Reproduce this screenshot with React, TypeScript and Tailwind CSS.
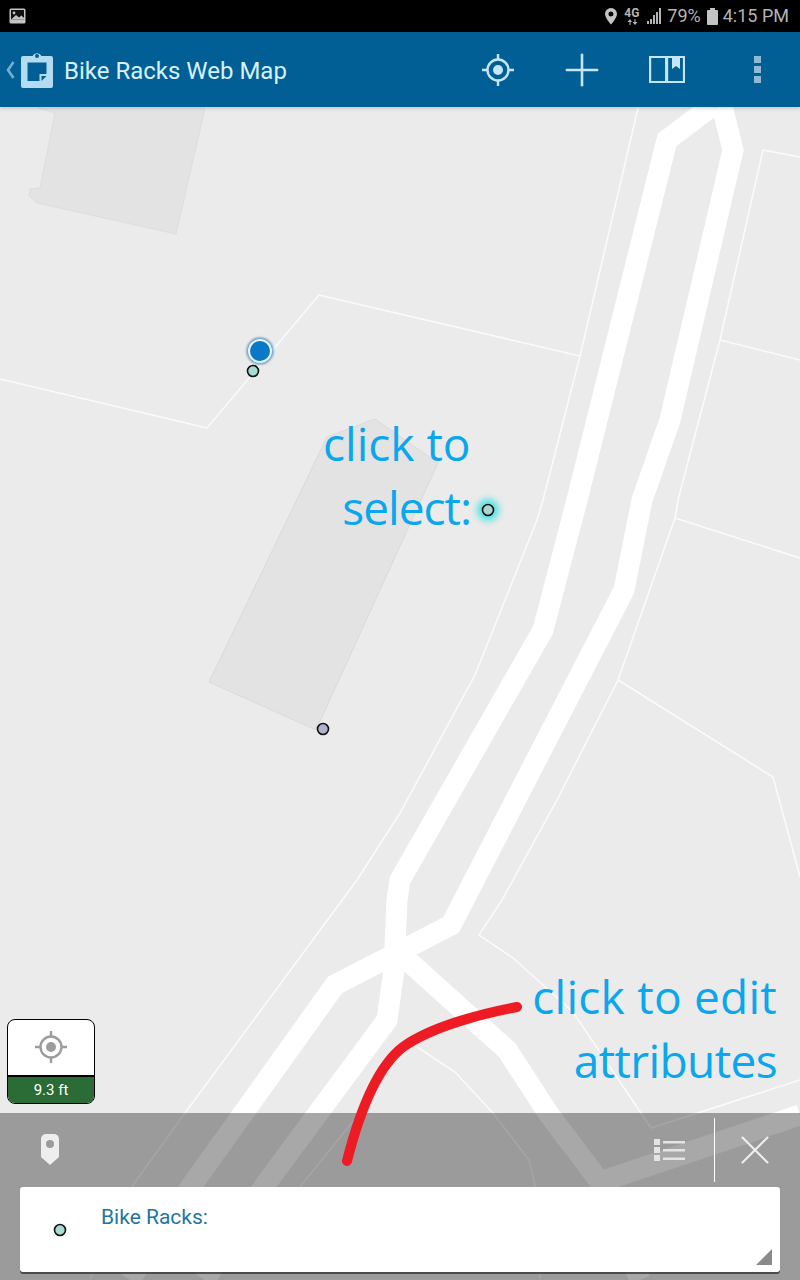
import { Plus, X } from 'lucide-react';

const thinLines = [
  '0,379 207,428 319,295 580,356',
  '638,108 580,356 543,500 537,520 475,675 400,813 357,880 185,1113 133,1185 90,1280',
  '763,150 800,157',
  '763,150 720,340 678,500 675,518 618,680 557,800 502,900 479,935 513,958 573,1012 651,1128 800,1080',
  '720,340 800,360',
  '675,518 800,558',
  '618,680 773,777 800,877',
  '417,1047 455,1072 493,1113 529,1160 535,1185 540,1280',
  '354,1120 300,1187',
];

const roads = [
  '712,106 667,140 577,500 543,630 400,880 397,900 394,970 387,1020 265,1185 205,1280',
  '722,106 733,150 670,420 642,500 624,590 451,925 335,985 192,1185 130,1280',
  '396,950 507,1050 548,1113 600,1182 640,1280',
  '600,1182 800,1115',
];

function BikeRackDot({ x, y, fill = '#a6dcd2' }: { x: number; y: number; fill?: string }) {
  return <circle cx={x} cy={y} r={5.5} fill={fill} stroke="#111" strokeWidth={1.6} />;
}

function MapLayer() {
  return (
    <svg className="absolute inset-0" width={800} height={1173} viewBox="0 107 800 1173">
      <defs>
        <filter id="glow" x="-100%" y="-100%" width="300%" height="300%">
          <feGaussianBlur stdDeviation="3" />
        </filter>
        <filter id="halo" x="-50%" y="-50%" width="200%" height="200%">
          <feGaussianBlur stdDeviation="1" />
        </filter>
      </defs>
      <polygon
        points="38,108 55,113 40,188 30,189 29,196 37,203 176,234 205,108"
        fill="#e3e3e3"
        stroke="#dedede"
      />
      <polygon points="375,419 438,463 316,730 209,682 327,437" fill="#e3e3e3" stroke="#dadada" />
      {thinLines.map((pts) => (
        <polyline key={pts} points={pts} fill="none" stroke="#fbfbfb" strokeWidth={1.5} />
      ))}
      {roads.map((pts) => (
        <polyline key={pts} points={pts} fill="none" stroke="#fff" strokeWidth={21} strokeLinejoin="miter" />
      ))}
      <circle cx={260} cy={351} r={13.5} fill="#2a72b0" opacity={0.7} filter="url(#halo)" />
      <circle cx={260} cy={351} r={12} fill="#e8f6fd" />
      <circle cx={260} cy={351} r={10} fill="#0a78c8" />
      <BikeRackDot x={253} y={371} />
      <circle cx={488} cy={510} r={11} fill="#22e0e0" opacity={0.75} filter="url(#glow)" />
      <BikeRackDot x={488} y={510} fill="#a9d6d2" />
      <BikeRackDot x={323} y={729} fill="#aeb2cf" />
    </svg>
  );
}

function TargetIcon({ size, color }: { size: number; color: string }) {
  return (
    <svg width={size} height={size} viewBox="0 0 32 32" fill="none" stroke={color}>
      <circle cx={16} cy={16} r={10.5} strokeWidth={2.4} />
      <circle cx={16} cy={16} r={5} fill={color} stroke="none" />
      <path d="M16 0v5M16 27v5M0 16h5M27 16h5" strokeWidth={2.4} />
    </svg>
  );
}

function StatusBar() {
  return (
    <div className="flex h-8 shrink-0 items-center bg-black pl-[9px] pr-[11px] text-[#b4b4b4]">
      <svg width={17} height={16} viewBox="0 0 17 16">
        <rect x={0.5} y={0.5} width={16} height={15} rx={1.5} fill="#c4c4c4" />
        <rect x={2} y={2} width={13} height={9.5} fill="#111" />
        <circle cx={5} cy={5} r={1.4} fill="#c4c4c4" />
        <path d="M2 11.5 7 7l3 2.5 2.5-2 2.5 2.5v1.5z" fill="#c4c4c4" />
      </svg>
      <div className="ml-auto flex items-center">
        <svg width={14} height={18} viewBox="0 0 14 18">
          <path
            d="M7 1a6 6 0 0 0-6 6c0 4 6 10.500 6 10.500S13 11 13 7a6 6 0 0 0-6-6zm0 8.500A2.500 2.500 0 1 1 7 4.500a2.500 2.500 0 0 1 0 5z"
            fill="#c4c4c4"
          />
        </svg>
        <div className="ml-[6px] flex w-[18px] flex-col items-start">
          <span className="text-[12px] font-bold leading-[10px]">4G</span>
          <svg className="ml-[3px] mt-[1px]" width={11} height={6} viewBox="0 0 11 6" fill="#b4b4b4">
            <path d="M2.500 6V3H0.500l2.500-3 2 3H3.500v3zM7.500 0v3h-2l2.500 3 2.500-3H8.500V0z" />
          </svg>
        </div>
        <svg className="ml-[5px]" width={15} height={16} viewBox="0 0 15 16" fill="#b4b4b4">
          <rect x={0} y={13} width={2} height={3} />
          <rect x={3} y={11} width={2} height={5} />
          <rect x={6} y={7} width={2} height={9} />
          <rect x={9} y={4} width={2} height={12} />
          <rect x={12} y={0} width={2} height={16} />
        </svg>
        <span className="ml-[5px] text-[18px] leading-none">79%</span>
        <svg className="ml-[6px]" width={11} height={17} viewBox="0 0 11 17" fill="#c4c4c4">
          <rect x={3} y={0} width={5} height={2} />
          <rect x={0} y={2} width={11} height={15} rx={1} />
        </svg>
        <span className="ml-[5px] text-[18px] leading-none">4:15 PM</span>
      </div>
    </div>
  );
}

function Header() {
  return (
    <header className="relative z-10 flex h-[75px] shrink-0 items-center bg-[#025f96] text-[#d6f1fb] shadow-[0_1px_4px_rgba(0,0,0,0.2)]">
      <svg className="ml-[6px]" width={9} height={18} viewBox="0 0 9 18" fill="none" stroke="#74aed0" strokeWidth={2.6}>
        <path d="M7.500 1 2 9l5.500 8" />
      </svg>
      <svg className="ml-[6px] mt-[-1px]" width={32} height={38} viewBox="0 0 32 38">
        <path
          d="M2 6h9.500a5 5 0 0 1 9 0H30a2 2 0 0 1 2 2v28a2 2 0 0 1-2 2H2a2 2 0 0 1-2-2V8a2 2 0 0 1 2-2z"
          fill="#b4dcf0"
        />
        <circle cx={16} cy={6} r={2} fill="#025f96" />
        <path d="M6.500 12.500h19v11.500h-7v7h-12z" fill="#025f96" />
        <path d="M20.500 26h5l-5 5z" fill="#025f96" />
      </svg>
      <h1 className="ml-[11px] mt-[2px] text-[24px] leading-none">Bike Racks Web Map</h1>
      <div className="ml-auto flex items-center">
        <TargetIcon size={32} color="#c4e6f6" />
        <Plus className="ml-[42px] text-[#c4e6f6]" size={52} strokeWidth={1.2} />
        <svg className="ml-[41px]" width={36} height={29} viewBox="0 0 36 29" fill="none" stroke="#c4e6f6" strokeWidth={2.2}>
          <path d="M1.100 2h16v25h-16zM18 2h17v25H18z" />
          <path d="M18 1v27" />
          <path d="M23 2h8v12l-4-3-4 3z" fill="#c4e6f6" stroke="none" />
        </svg>
        <div className="ml-[69px] mr-[39px] flex flex-col gap-[3px]">
          <span className="block size-[7px] bg-[#8fbad4]" />
          <span className="block size-[7px] bg-[#8fbad4]" />
          <span className="block size-[7px] bg-[#8fbad4]" />
        </div>
      </div>
    </header>
  );
}

function AccuracyBadge() {
  return (
    <div className="absolute bottom-[176px] left-[7px] flex h-[85px] w-[88px] flex-col overflow-hidden rounded-lg border border-black bg-white">
      <div className="flex flex-1 items-center justify-center pb-[2px]">
        <TargetIcon size={32} color="#9c9c9c" />
      </div>
      <div className="flex h-[28px] items-center justify-center border-t-2 border-black bg-[#2b6b35] text-[15px] leading-none text-white">
        9.3 ft
      </div>
    </div>
  );
}

function FeaturePanel() {
  return (
    <div className="absolute inset-x-0 bottom-0 flex h-[167px] flex-col bg-black/[0.34]">
      <div className="flex h-[74px] items-center text-[#eeeeee]">
        <svg className="ml-[40px] mt-[-1px]" width={20} height={33} viewBox="0 0 20 33">
          <path
            d="M6 1h8a5 5 0 0 1 5 5v18l-9 8-9-8V6a5 5 0 0 1 5-5z"
            fill="#eeeeee"
          />
          <circle cx={10} cy={11} r={4} fill="#9c9c9c" />
        </svg>
        <div className="ml-auto flex items-center">
          <svg width={31} height={24} viewBox="0 0 31 24" fill="#e4e4e4">
            <rect x={0} y={1} width={6} height={6} />
            <rect x={0} y={9} width={6} height={6} />
            <rect x={0} y={17} width={6} height={6} />
            <rect x={9} y={3} width={22} height={2.500} />
            <rect x={9} y={11} width={22} height={2.500} />
            <rect x={9} y={19.500} width={22} height={2.500} />
          </svg>
          <div className="ml-[29px] h-[64px] w-px bg-white" />
          <X className="ml-[15px] mr-5 text-[#eeeeee]" size={50} strokeWidth={1} />
        </div>
      </div>
      <div className="relative mx-5 flex h-[85px] items-start rounded-[3px] bg-white shadow-[0_2px_0_rgba(50,50,50,0.75)]">
        <svg className="ml-[33px] mt-[36px]" width={14} height={14} viewBox="0 0 14 14">
          <circle cx={7} cy={7} r={5.500} fill="#a6dcd2" stroke="#111" strokeWidth={1.6} />
        </svg>
        <span className="ml-[34px] mt-[18px] text-[21px] leading-6 text-[#1f76a0]">Bike Racks:</span>
        <svg className="absolute bottom-[7px] right-2" width={16} height={16} viewBox="0 0 16 16">
          <path d="M16 0v16H0z" fill="#8a8a8a" />
        </svg>
      </div>
    </div>
  );
}

export default function App() {
  return (
    <div className="relative flex h-[1280px] w-[800px] flex-col overflow-hidden bg-[#ebebeb] font-['Roboto',sans-serif]">
      <StatusBar />
      <Header />
      <main className="relative flex-1">
        <MapLayer />
        <AccuracyBadge />
        <FeaturePanel />
        <div className="absolute left-[323px] top-[304px] w-[148px] font-['Open_Sans',sans-serif] text-[46px] leading-[64px] text-[#0aa6ee]">
          <div className="whitespace-nowrap">click to</div>
          <div className="whitespace-nowrap text-right tracking-[-1px]">select:</div>
        </div>
        <div className="absolute right-[23px] top-[857px] text-right font-['Open_Sans',sans-serif] text-[46px] leading-[64px] text-[#0aa6ee]">
          <div className="whitespace-nowrap tracking-[0.25px]">click to edit</div>
          <div className="whitespace-nowrap tracking-[-0.6px]">attributes</div>
        </div>
        <svg className="absolute inset-0" width={800} height={1173} viewBox="0 107 800 1173" fill="none">
          <path
            d="M517 1007C485 1013 432 1026 403 1047C378 1066 360 1110 347 1161"
            stroke="#ed1c24"
            strokeWidth={10}
            strokeLinecap="round"
          />
        </svg>
      </main>
    </div>
  );
}
